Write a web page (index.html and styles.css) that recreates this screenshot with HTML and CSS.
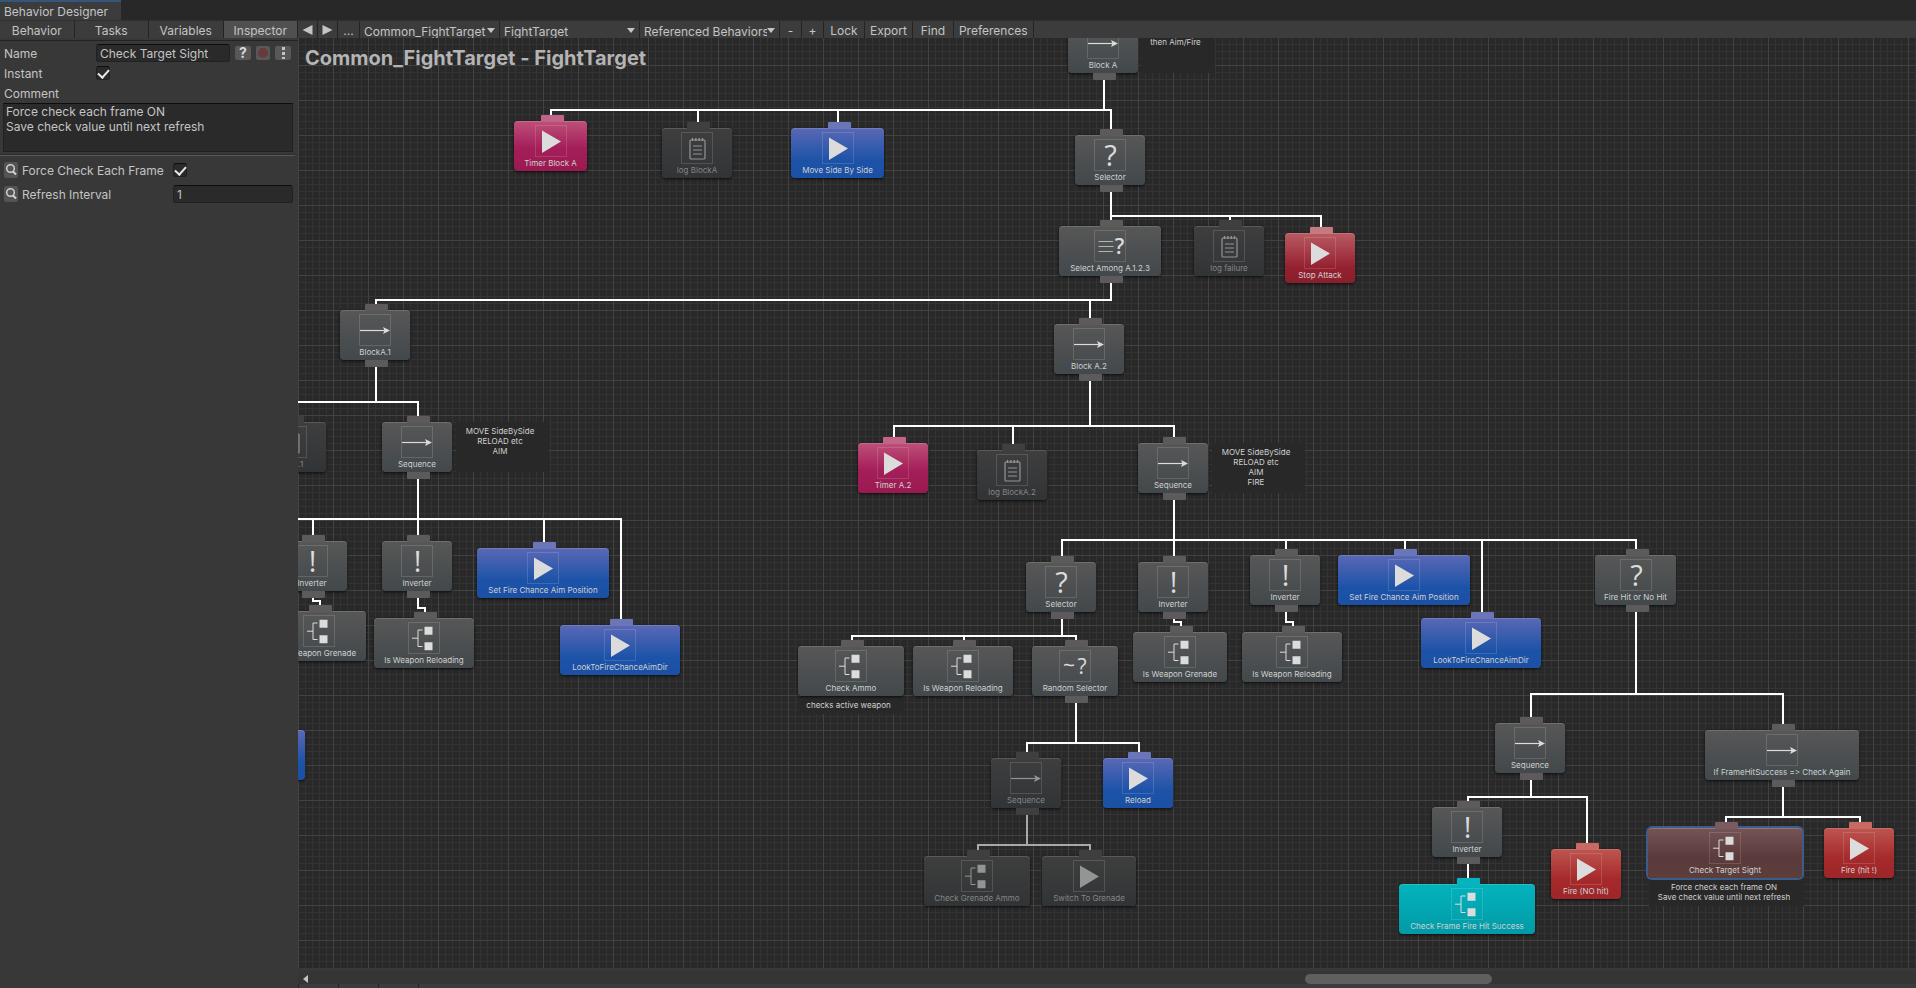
FILE: index.html
```html
<!DOCTYPE html>
<html lang="en">
<head>
    <meta charset="UTF-8">
    <meta name="viewport" content="width=device-width, initial-scale=1.0">
    <title>Behavior Designer</title>
    <link rel="stylesheet" href="styles.css">
</head>
<body>
    <header class="window-bar">
        <span class="window-tab">Behavior Designer</span>
    </header>

    <div class="window">
        <aside class="panel">
            <nav class="panel-tabs">
                <button type="button">Behavior</button>
                <button type="button">Tasks</button>
                <button type="button">Variables</button>
                <button type="button" class="active">Inspector</button>
            </nav>

            <form class="inspector">
                <div class="row name-row">
                    <label for="name">Name</label>
                    <input type="text" id="name" class="field" value="Check Target Sight">
                    <button type="button" class="mini" aria-label="Help">
                        <svg viewBox="0 0 16 14"><text x="8" y="12" class="help">?</text></svg>
                    </button>
                    <button type="button" class="mini dot" aria-label="Breakpoint">
                        <svg viewBox="0 0 14 14"><circle cx="7" cy="7" r="5" fill="#693a3c"/></svg>
                    </button>
                    <button type="button" class="mini" aria-label="Menu">
                        <svg viewBox="0 0 16 14"><path d="M7 1h3v3H7zM7 6h3v3H7zM7 11h3v2H7z" fill="#c4c4c4"/></svg>
                    </button>
                </div>
                <div class="row">
                    <label for="instant">Instant</label>
                    <input type="checkbox" id="instant" class="check" checked>
                </div>
                <div class="row">
                    <label for="comment">Comment</label>
                </div>
                <textarea id="comment" class="field">Force check each frame ON
Save check value until next refresh</textarea>
                <hr>
                <div class="row prop">
                    <button type="button" class="lens" aria-label="Find reference">
                        <svg viewBox="0 0 14 16"><circle cx="6.500" cy="6.500" r="3.800" fill="none" stroke="#d0d0d0" stroke-width="1.500"/><path d="M9 9.500 12 12.500" stroke="#d0d0d0" stroke-width="2"/></svg>
                    </button>
                    <label for="force">Force Check Each Frame</label>
                    <input type="checkbox" id="force" class="check" checked>
                </div>
                <div class="row prop">
                    <button type="button" class="lens" aria-label="Find reference">
                        <svg viewBox="0 0 14 16"><circle cx="6.500" cy="6.500" r="3.800" fill="none" stroke="#d0d0d0" stroke-width="1.500"/><path d="M9 9.500 12 12.500" stroke="#d0d0d0" stroke-width="2"/></svg>
                    </button>
                    <label for="interval">Refresh Interval</label>
                    <input type="text" id="interval" class="field" value="1">
                </div>
            </form>
        </aside>

        <main class="editor">
            <div class="toolbar">
                <button type="button" class="nav" aria-label="Back"><svg viewBox="0 0 10 10"><path d="M10 0v10L0 5Z"/></svg></button>
                <button type="button" class="nav" aria-label="Forward"><svg viewBox="0 0 10 10"><path d="M0 0v10l10-5Z"/></svg></button>
                <button type="button" class="small-btn">...</button>
                <span class="drop"><select aria-label="Object"><option>Common_FightTarget</option></select></span>
                <span class="drop"><select aria-label="Behavior"><option>FightTarget</option></select></span>
                <span class="drop"><select aria-label="References"><option>Referenced Behaviors</option></select></span>
                <button type="button" class="small-btn">-</button>
                <button type="button" class="small-btn">+</button>
                <button type="button">Lock</button>
                <button type="button">Export</button>
                <button type="button">Find</button>
                <button type="button">Preferences</button>
            </div>

            <div class="canvas" id="canvas">
                <svg class="links" id="links"></svg>
                <h1>Common_FightTarget - FightTarget</h1>
            </div>

            <div class="scrollbar">
                <svg viewBox="0 0 5 8"><path d="M5 0v8L0 4Z"/></svg>
                <div class="thumb"></div>
            </div>
            <div class="footer"><i></i><i></i><i></i></div>
        </main>
    </div>

    <script src="script.js"></script>
</body>
</html>
```

FILE: styles.css
```css
* {
    box-sizing: border-box;
}

body {
    margin: 0;
    height: 100vh;
    display: flex;
    flex-direction: column;
    overflow: hidden;
    background: #282828;
    color: #c4c4c4;
    font-family: Inter, "Liberation Sans", sans-serif;
    font-size: 12px;
    font-feature-settings: "calt" 0;
}

button,
input,
select,
textarea {
    font: inherit;
    font-feature-settings: inherit;
    color: inherit;
    margin: 0;
    border: none;
    border-radius: 0;
}

.window-bar {
    height: 20px;
    flex: none;
    background: #282828;
}

.window-tab {
    display: inline-block;
    width: 121px;
    height: 20px;
    padding-left: 4px;
    border-top: 2px solid #34567a;
    background: #3c3c3c;
    line-height: 20px;
    white-space: nowrap;
}

.window {
    flex: 1;
    min-height: 0;
    display: flex;
}

/* left panel */
.panel {
    width: 298px;
    flex: none;
    background: #383838;
}

.panel-tabs {
    display: grid;
    grid-template-columns: repeat(4, 1fr);
    height: 21px;
    border-bottom: 1px solid #232323;
}

.panel-tabs button {
    height: 18px;
    padding: 2px 0 0;
    background: #3c3c3c;
    border-right: 1px solid #242424;
    border-top: 1px solid #303030;
}

.panel-tabs .active {
    background: #505050;
}

.inspector {
    padding: 2px 5px 0 4px;
}

.row {
    display: flex;
    align-items: center;
    height: 20px;
}

.row label {
    width: 92px;
    flex: none;
    white-space: nowrap;
}

.field {
    height: 18px;
    padding: 0 3px;
    background: #2a2a2a;
    border: 1px solid #212121;
    border-top-color: #0d0d0d;
    border-radius: 3px;
    resize: none;
    min-width: 0;
}

.name-row {
    gap: 5px;
    padding-right: 2px;
}

.name-row label {
    width: 87px;
}

.name-row .field {
    flex: 1;
}

.mini {
    width: 16px;
    height: 14px;
    padding: 0;
    display: block;
    background: #585858;
    border-radius: 2px;
}

.mini.dot {
    width: 14px;
}

.mini svg,
.lens svg {
    display: block;
    width: 100%;
    height: 100%;
}

.help {
    font-size: 14px;
    font-weight: 700;
    text-anchor: middle;
    fill: #d8d8d8;
}

.check {
    appearance: none;
    width: 14px;
    height: 14px;
    display: grid;
    place-items: center;
    background: #2a2a2a;
    border: 1px solid #212121;
    border-top-color: #0d0d0d;
    border-radius: 3px;
}

.check:checked::before {
    content: "";
    width: 9px;
    height: 5px;
    border-left: 2px solid #e6e6e6;
    border-bottom: 2px solid #e6e6e6;
    transform: translateY(-1px) rotate(-48deg);
}

textarea.field {
    display: block;
    width: 290px;
    height: 49px;
    margin-left: -1px;
    border-radius: 0;
    line-height: 15px;
    padding: 0 2px;
    overflow: hidden;
}

hr {
    height: 2px;
    margin: 2px -2px 2px -4px;
    border: none;
    border-top: 1px solid #2c2c2c;
    background: #5a5a5a;
}

.prop {
    height: 24px;
}

.prop label {
    width: 155px;
    padding-left: 4px;
}

.prop .field {
    flex: 1;
}

.lens {
    width: 14px;
    height: 16px;
    padding: 0;
    background: #545454;
    border-radius: 2px;
}

/* right side */
.editor {
    flex: 1;
    min-width: 0;
    display: flex;
    flex-direction: column;
}

.toolbar {
    display: flex;
    height: 18px;
    background: #3c3c3c;
    border-top: 1px solid #303030;
}

.toolbar button,
.drop {
    min-width: 41px;
    height: 17px;
    padding: 0 5px;
    background: #3c3c3c;
    border-right: 1px solid #242424;
    white-space: nowrap;
    line-height: 19px;
}

.toolbar .nav {
    min-width: 20px;
    padding: 0 4px;
}

.nav svg {
    display: block;
    width: 11px;
    height: 10px;
    fill: #c4c4c4;
}

.toolbar .small-btn {
    min-width: 22px;
    padding: 0;
}

.drop {
    position: relative;
    width: 140px;
    padding: 0;
}

.drop select {
    appearance: none;
    display: block;
    width: 127px;
    height: 17px;
    padding: 1px 0 0 4px;
    background: none;
    overflow: hidden;
}

.drop::after {
    content: "";
    position: absolute;
    right: 4px;
    top: 7px;
    border: 4px solid transparent;
    border-top: 5px solid #c4c4c4;
    border-bottom: none;
}

.canvas {
    position: relative;
    flex: 1;
    min-height: 0;
    overflow: hidden;
    background-color: #292929;
    background-image:
        linear-gradient(to right, #424242 1px, transparent 1px),
        linear-gradient(to bottom, #424242 1px, transparent 1px),
        linear-gradient(to right, #333333 1px, transparent 1px),
        linear-gradient(to bottom, #333333 1px, transparent 1px);
    background-size: 35px 35px, 35px 35px, 7px 7px, 7px 7px;
    background-position: 0 0, 0 27px, 0 0, 0 27px;
}

.canvas h1 {
    position: relative;
    margin: 8px 0 0 7px;
    font-size: 20px;
    line-height: 24px;
    font-weight: 700;
    color: #b4b4b4;
}

.links {
    position: absolute;
    left: 0;
    top: 0;
    width: 100%;
    height: 100%;
    fill: none;
    stroke: #ffffff;
    stroke-width: 2;
}

.links .dim {
    stroke: #a9a9a9;
}

/* nodes */
.node {
    position: absolute;
    height: 50px;
    display: flex;
    flex-direction: column;
    align-items: center;
    padding-top: 4px;
    border-radius: 4px;
    background: linear-gradient(#575757, #42484b);
    box-shadow: 0 1px 3px rgba(0, 0, 0, 0.7), inset 0 1px 0 rgba(255, 255, 255, 0.15);
    color: #dcdcdc;
    --tab: #5c5a5a;
}

.node::before,
.node.parent::after {
    content: "";
    position: absolute;
    left: 50%;
    top: -6px;
    width: 23px;
    height: 7px;
    margin-left: -10px;
    background: var(--tab);
    border-radius: 1px 1px 0 0;
}

.node.parent::after {
    top: 50px;
    border-radius: 0 0 1px 1px;
}

.node svg {
    width: 32px;
    height: 32px;
    flex: none;
    box-shadow: inset 0 0 0 1px rgba(255, 255, 255, 0.14);
}

.node span,
.note {
    font-size: 8px;
    line-height: 10px;
    white-space: nowrap;
    color: #d0d0d0;
}

.node span {
    margin-top: 1px;
}

.blue {
    background: linear-gradient(#5a68b5, #1c53a8 65%, #1b50a4);
    --tab: #6a76b8;
}

.pink {
    background: linear-gradient(#bd5078, #a41e59 55%, #991a50);
    --tab: #c2648a;
}

.crimson {
    background: linear-gradient(#b95b62, #94202f 70%, #8a1f2d);
    --tab: #c47a7e;
}

.red {
    background: linear-gradient(#bd5650, #a62a2b 60%, #9c2628);
    --tab: #c86a62;
}

.teal {
    background: linear-gradient(#02b4bd, #029aa6);
    --tab: #05b5be;
}

.picked {
    background: linear-gradient(#745456, #5a3a3a 60%, #5c3e3d);
    box-shadow: 0 0 0 2px #3c5c8c, inset 0 1px 0 rgba(255, 255, 255, 0.2);
    --tab: #7a5c60;
}

.off {
    background: linear-gradient(#3e3e3e, #313436);
    color: #949494;
    --tab: #3f3f3f;
}

.off span {
    color: #858585;
}

.note {
    position: absolute;
    padding: 4px 5px 0 0;
    background: #282828;
    text-align: center;
    white-space: pre;
}

.glyph {
    font-family: "Open Sans", "Noto Sans", sans-serif;
    font-size: 29px;
    text-anchor: middle;
    fill: currentColor;
}

.glyph.small {
    font-size: 21px;
}

.glyph.bold {
    font-weight: 600;
}

.scrollbar {
    display: flex;
    align-items: center;
    height: 16px;
    padding: 3px 0 1px;
    background: #353535;
    border-top: 3px solid #383838;
}

.scrollbar svg {
    width: 5px;
    height: 8px;
    margin-left: 5px;
    fill: #c4c4c4;
}

.scrollbar .thumb {
    width: 11.6%;
    height: 10px;
    margin-left: 61.6%;
    border-radius: 5px;
    background: #5f5f5f;
}

.footer {
    display: flex;
    height: 4px;
    background: #3c3c3c;
    border-left: 1px solid #242424;
}

.footer i {
    width: 40px;
    border-right: 1px solid #242424;
}
```

FILE: script.js
```javascript
const icons = {
    play: '<path d="M7 5.5 26 16.5 7 28Z" fill="currentColor"/>',
    arrow: '<path d="M1 16.5H26" stroke="currentColor" stroke-width="1.2"/>' +
        '<path d="M24 13 31 16.5 24 20 25.5 16.5Z" fill="currentColor"/>',
    tree: '<path d="M4 16.2H10M14.5 8H10V24.5H14.5" fill="none" stroke="currentColor"/>' +
        '<path d="M16.5 4.8h8v8h-8zM16.5 20.2h8v8h-8z" fill="currentColor"/>',
    log: '<rect x="9" y="8" width="15" height="19" rx="1" fill="none" stroke="currentColor" stroke-width="1.2"/>' +
        '<path d="M12 14h9M12 18h9M12 22h9" stroke="currentColor" stroke-width="1.2"/>' +
        '<path d="M11.5 6v3M14.8 6v3M18.2 6v3M21.5 6v3" stroke="currentColor" stroke-width="1.4"/>',
    select: '<text x="16.5" y="26.5" class="glyph">?</text>',
    invert: '<text x="16.5" y="26.5" class="glyph">!</text>',
    random: '<text x="10" y="23" class="glyph small">~</text><text x="23" y="23.5" class="glyph small">?</text>',
    among: '<path d="M4.5 11.5h14.5M4.5 16.5h15M4.5 21.5h14.5" stroke="currentColor" opacity=".7"/>' +
        '<text x="25.5" y="23.5" class="glyph small bold">?</text>'
};

// x, y and width of each node body on the canvas
const nodes = {
    blockA: { x: 770, y: -15, w: 70, icon: 'arrow', text: 'Block A' },
    timerA: { x: 216, y: 83, w: 73, icon: 'play', text: 'Timer Block A', type: 'pink' },
    logA: { x: 364, y: 90, w: 70, icon: 'log', text: 'log BlockA', type: 'off' },
    moveSide: { x: 493, y: 90, w: 93, icon: 'play', text: 'Move Side By Side', type: 'blue' },
    selector: { x: 777, y: 97, w: 70, icon: 'select', text: 'Selector' },
    among: { x: 761, y: 188, w: 102, icon: 'among', text: 'Select Among A.1.2.3' },
    logFail: { x: 896, y: 188, w: 70, icon: 'log', text: 'log failure', type: 'off' },
    stop: { x: 987, y: 195, w: 70, icon: 'play', text: 'Stop Attack', type: 'crimson' },

    blockA1: { x: 42, y: 272, w: 70, icon: 'arrow', text: 'BlockA.1' },
    logA1: { x: -42, y: 384, w: 70, icon: 'log', text: 'log A.1', type: 'off' },
    seqA1: { x: 84, y: 384, w: 70, icon: 'arrow', text: 'Sequence' },
    invG1: { x: -21, y: 503, w: 70, icon: 'invert', text: 'Inverter' },
    invR1: { x: 84, y: 503, w: 70, icon: 'invert', text: 'Inverter' },
    grenade1: { x: -26, y: 573, w: 94, icon: 'tree', text: 'Is Weapon Grenade' },
    reloading1: { x: 76, y: 580, w: 100, icon: 'tree', text: 'Is Weapon Reloading' },
    aimPos1: { x: 179, y: 510, w: 132, icon: 'play', text: 'Set Fire Chance Aim Position', type: 'blue' },
    look1: { x: 262, y: 587, w: 120, icon: 'play', text: 'LookToFireChanceAimDir', type: 'blue' },
    edge: { x: -63, y: 692, w: 70, icon: 'play', text: '', type: 'blue' },

    blockA2: { x: 756, y: 286, w: 70, icon: 'arrow', text: 'Block A.2' },
    timerA2: { x: 560, y: 405, w: 70, icon: 'play', text: 'Timer A.2', type: 'pink' },
    logA2: { x: 679, y: 412, w: 70, icon: 'log', text: 'log BlockA.2', type: 'off' },
    seqA2: { x: 840, y: 405, w: 70, icon: 'arrow', text: 'Sequence' },
    selAmmo: { x: 728, y: 524, w: 70, icon: 'select', text: 'Selector' },
    invG2: { x: 840, y: 524, w: 70, icon: 'invert', text: 'Inverter' },
    invR2: { x: 952, y: 517, w: 70, icon: 'invert', text: 'Inverter' },
    aimPos2: { x: 1040, y: 517, w: 132, icon: 'play', text: 'Set Fire Chance Aim Position', type: 'blue' },
    look2: { x: 1123, y: 580, w: 120, icon: 'play', text: 'LookToFireChanceAimDir', type: 'blue' },
    hitOrNot: { x: 1297, y: 517, w: 81, icon: 'select', text: 'Fire Hit or No Hit' },
    grenade2: { x: 835, y: 594, w: 94, icon: 'tree', text: 'Is Weapon Grenade' },
    reloading2: { x: 944, y: 594, w: 100, icon: 'tree', text: 'Is Weapon Reloading' },

    ammo: { x: 500, y: 608, w: 106, icon: 'tree', text: 'Check Ammo' },
    reloading3: { x: 615, y: 608, w: 100, icon: 'tree', text: 'Is Weapon Reloading' },
    random: { x: 734, y: 608, w: 86, icon: 'random', text: 'Random Selector' },
    seqOff: { x: 693, y: 720, w: 70, icon: 'arrow', text: 'Sequence', type: 'off' },
    reload: { x: 805, y: 720, w: 70, icon: 'play', text: 'Reload', type: 'blue' },
    grenadeAmmo: { x: 626, y: 818, w: 106, icon: 'tree', text: 'Check Grenade Ammo', type: 'off' },
    switchTo: { x: 744, y: 818, w: 94, icon: 'play', text: 'Switch To Grenade', type: 'off' },

    seqNo: { x: 1197, y: 685, w: 70, icon: 'arrow', text: 'Sequence' },
    again: { x: 1407, y: 692, w: 154, icon: 'arrow', text: 'If FrameHitSuccess => Check Again' },
    invHit: { x: 1134, y: 769, w: 70, icon: 'invert', text: 'Inverter' },
    fireNo: { x: 1253, y: 811, w: 70, icon: 'play', text: 'Fire (NO hit)', type: 'red' },
    frameHit: { x: 1101, y: 846, w: 136, icon: 'tree', text: 'Check Frame Fire Hit Success', type: 'teal' },
    sight: { x: 1350, y: 790, w: 154, icon: 'tree', text: 'Check Target Sight', type: 'picked' },
    fireHit: { x: 1526, y: 790, w: 70, icon: 'play', text: 'Fire (hit !)', type: 'red' }
};

// parent, height of the horizontal bar, children
const links = [
    ['blockA', 72, ['timerA', 'logA', 'moveSide', 'selector']],
    ['selector', 178, ['among', 'logFail', 'stop']],
    ['among', 262, ['blockA1', 'blockA2']],
    ['blockA1', 364, ['logA1', 'seqA1']],
    ['seqA1', 481, ['edge', 'invG1', 'invR1', 'aimPos1', 'look1']],
    ['invG1', 563, ['grenade1']],
    ['invR1', 570, ['reloading1']],
    ['blockA2', 388, ['timerA2', 'logA2', 'seqA2']],
    ['seqA2', 502, ['selAmmo', 'invG2', 'invR2', 'aimPos2', 'look2', 'hitOrNot']],
    ['invG2', 584, ['grenade2']],
    ['invR2', 584, ['reloading2']],
    ['selAmmo', 598, ['ammo', 'reloading3', 'random']],
    ['random', 705, ['seqOff', 'reload']],
    ['seqOff', 807, ['grenadeAmmo', 'switchTo']],
    ['hitOrNot', 656, ['seqNo', 'again']],
    ['seqNo', 759, ['invHit', 'fireNo']],
    ['invHit', 835, ['frameHit']],
    ['again', 779, ['sight', 'fireHit']]
];

const notes = [
    { x: 843, y: -5, w: 74, h: 40, text: 'then Aim/Fire' },
    { x: 158, y: 384, w: 93, h: 50, text: 'MOVE SideBySide\nRELOAD etc\nAIM' },
    { x: 914, y: 405, w: 93, h: 50, text: 'MOVE SideBySide\nRELOAD etc\nAIM\nFIRE' },
    { x: 500, y: 658, w: 106, h: 18, text: 'checks active weapon' },
    { x: 1351, y: 840, w: 155, h: 28, text: 'Force check each frame ON\nSave check value until next refresh' }
];

const canvas = document.getElementById('canvas');
const linkLayer = document.getElementById('links');
const parents = links.map(link => link[0]);

const center = node => Math.floor(node.x + node.w / 2) + 1;

function place(el, item) {
    el.style.left = item.x + 'px';
    el.style.top = item.y + 'px';
    el.style.width = item.w + 'px';
    canvas.appendChild(el);
}

links.forEach(([from, barY, children]) => {
    const parent = nodes[from];
    const px = center(parent);
    children.forEach(name => {
        const child = nodes[name];
        const path = document.createElementNS('http://www.w3.org/2000/svg', 'path');
        path.setAttribute('d', `M${px} ${parent.y + 50}V${barY}H${center(child)}V${child.y}`);
        if (parent.type === 'off') {
            path.setAttribute('class', 'dim');
        }
        linkLayer.appendChild(path);
    });
});

notes.forEach(note => {
    const el = document.createElement('div');
    el.className = 'note';
    el.textContent = note.text;
    el.style.height = note.h + 'px';
    place(el, note);
});

Object.entries(nodes).forEach(([name, node]) => {
    const el = document.createElement('div');
    el.className = 'node ' + (node.type || '');
    if (parents.includes(name)) {
        el.classList.add('parent');
    }
    el.innerHTML = `<svg viewBox="0 0 32 32">${icons[node.icon]}</svg><span></span>`;
    el.querySelector('span').textContent = node.text;
    place(el, node);
});
```
